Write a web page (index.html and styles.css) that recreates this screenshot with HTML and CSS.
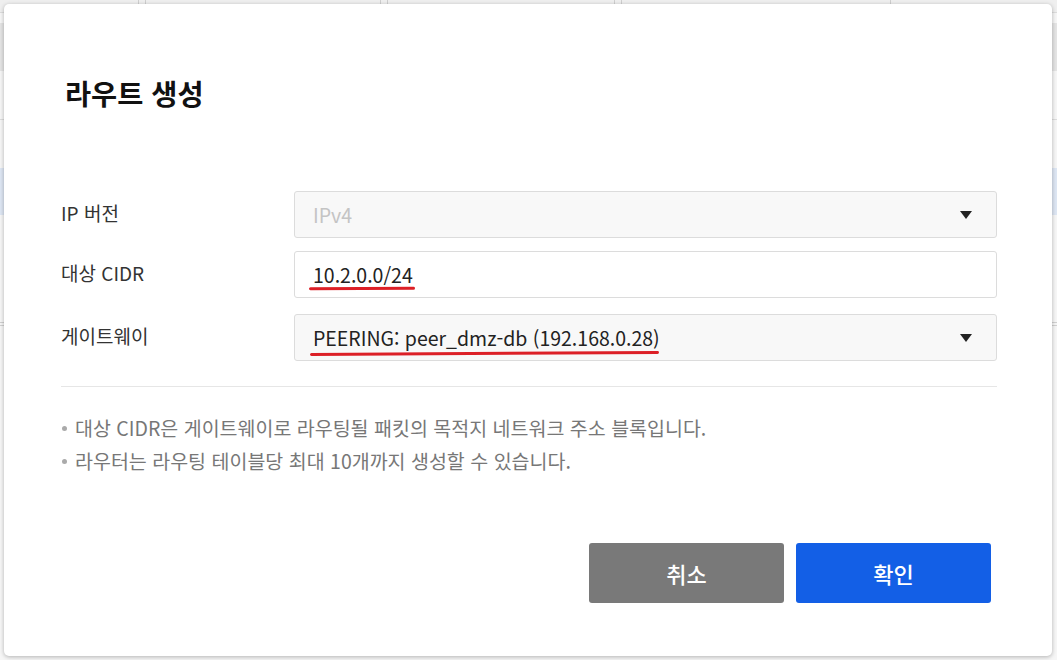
FILE: index.html
```html
<!DOCTYPE html>
<html lang="ko">
<head>
<meta charset="utf-8">
<link rel="stylesheet" href="styles.css">
</head>
<body>
<div class="page">
  <div class="tabs">
    <div class="tab t1"></div>
    <div class="tab t2"></div>
    <div class="tab t3"></div>
    <div class="tab t4"></div>
  </div>
  <div class="band gray"></div>
  <div class="band line1"></div>
  <div class="band blue"></div>
  <div class="band line2"></div>
</div>
<div class="modal">
  <h1 class="title">라우트 생성</h1>
  <div class="form">
    <div class="row">
      <div class="label">IP 버전</div>
      <div class="field select disabled"><span class="value">IPv4</span><span class="caret"></span></div>
    </div>
    <div class="row">
      <div class="label">대상 CIDR</div>
      <div class="field input"><span class="value mark">10.2.0.0/24</span></div>
    </div>
    <div class="row r3">
      <div class="label">게이트웨이</div>
      <div class="field select"><span class="value mark mark2">PEERING: peer_dmz-db (192.168.0.28)</span><span class="caret dark"></span></div>
    </div>
  </div>
  <hr class="divider">
  <ul class="notes">
    <li>대상 CIDR은 게이트웨이로 라우팅될 패킷의 목적지 네트워크 주소 블록입니다.</li>
    <li>라우터는 라우팅 테이블당 최대 10개까지 생성할 수 있습니다.</li>
  </ul>
  <div class="actions">
    <button class="btn cancel">취소</button>
    <button class="btn ok">확인</button>
  </div>
</div>
</body>
</html>
```

FILE: styles.css
```css
html, body {
  margin: 0;
  padding: 0;
}
body {
  width: 1057px;
  height: 660px;
  overflow: hidden;
  position: relative;
  background: #f6f6f6;
  font-family: "Noto Sans CJK KR", "Noto Sans", sans-serif;
}
.page {
  position: absolute;
  inset: 0;
}
.tabs {
  display: flex;
  height: 12px;
  border-bottom: 1px solid #dcdcdc;
  background: #efefef;
}
.tab {
  border-right: 1px solid #cfcfcf;
}
.t1 { width: 138px; }
.t2 { width: 234px; margin-left: 6px; border-left: 1px solid #cfcfcf; }
.t3 { width: 226px; margin-left: 6px; border-left: 1px solid #cfcfcf; }
.t4 { width: 268px; margin-left: 6px; border-left: 1px solid #cfcfcf; }
.band { position: absolute; left: 0; right: 0; }
.gray { top: 23px; height: 48px; background: #e4e4e4; }
.line1 { top: 119px; height: 1px; background: #dcdcdc; }
.blue { top: 168px; height: 47px; background: #dde6f3; }
.line2 { top: 322px; height: 2px; border-top: 1px solid #d0d0d0; border-bottom: 1px solid #d0d0d0; }

.modal {
  position: absolute;
  left: 4px;
  top: 4px;
  width: 1048px;
  height: 652px;
  box-sizing: border-box;
  background: #fff;
  border-radius: 5px;
  box-shadow: 0 1px 4px rgba(0,0,0,0.28);
  padding: 0 55px 0 57px;
}
.title {
  margin: 68px 0 0 4px;
  font-size: 28.4px;
  font-weight: 700;
  color: #111;
  line-height: 42px;
}
.form {
  margin-top: 77px;
  display: flex;
  flex-direction: column;
  gap: 13px;
}
.row {
  display: flex;
  align-items: center;
}
.r3 { margin-top: 3px; }
.label {
  width: 233px;
  font-size: 19px;
  color: #333;
  line-height: 26px;
  margin-top: -4px;
}
.field {
  flex: 1;
  height: 47px;
  box-sizing: border-box;
  border: 1px solid #dcdcdc;
  border-radius: 3px;
  display: flex;
  align-items: center;
  padding: 0 24px 0 18px;
  font-size: 19.5px;
  color: #222;
}
.select { background: #f8f8f8; }
.input { background: #fff; padding-left: 16px; }
.disabled .value { color: #c4c4c4; }
.value {
  flex: 1;
  line-height: 26px;
  position: relative;
}
.mark {
  flex: 0 0 auto;
  padding: 0 2px;
}
.mark::after {
  content: "";
  position: absolute;
  left: -2px;
  right: 0;
  bottom: -2px;
  height: 3px;
  background: #dc1f26;
  border-radius: 2px;
  transform: rotate(-0.3deg);
}
.mark2 { margin-left: -2px; flex: 1 1 auto; }
.mark2::after { left: -1px; right: auto; width: 349px; bottom: -4px; transform: rotate(-0.35deg); }
.caret {
  width: 0;
  height: 0;
  border-left: 6px solid transparent;
  border-right: 6px solid transparent;
  border-top: 8px solid #222;
  margin-left: auto;
}
.divider {
  margin: 25px 0 0 0;
  border: 0;
  border-top: 1px solid #e6e6e6;
}
.notes {
  list-style: none;
  margin: 24px 0 0 0;
  padding: 0;
}
.notes li {
  position: relative;
  padding-left: 14px;
  font-size: 19.5px;
  color: #777;
  line-height: 33px;
}
.notes li::before {
  content: "";
  position: absolute;
  left: 1px;
  top: 15px;
  width: 5px;
  height: 5px;
  border-radius: 50%;
  background: #aaa;
}
.actions {
  display: flex;
  justify-content: flex-end;
  gap: 12px;
  margin-top: 66px;
  padding-right: 6px;
}
.btn {
  width: 195px;
  height: 60px;
  border: 0;
  border-radius: 3px;
  color: #fff;
  font-family: inherit;
  font-size: 22px;
  font-weight: 500;
  cursor: pointer;
}
.cancel { background: #797979; }
.ok { background: #135fe6; }
```
